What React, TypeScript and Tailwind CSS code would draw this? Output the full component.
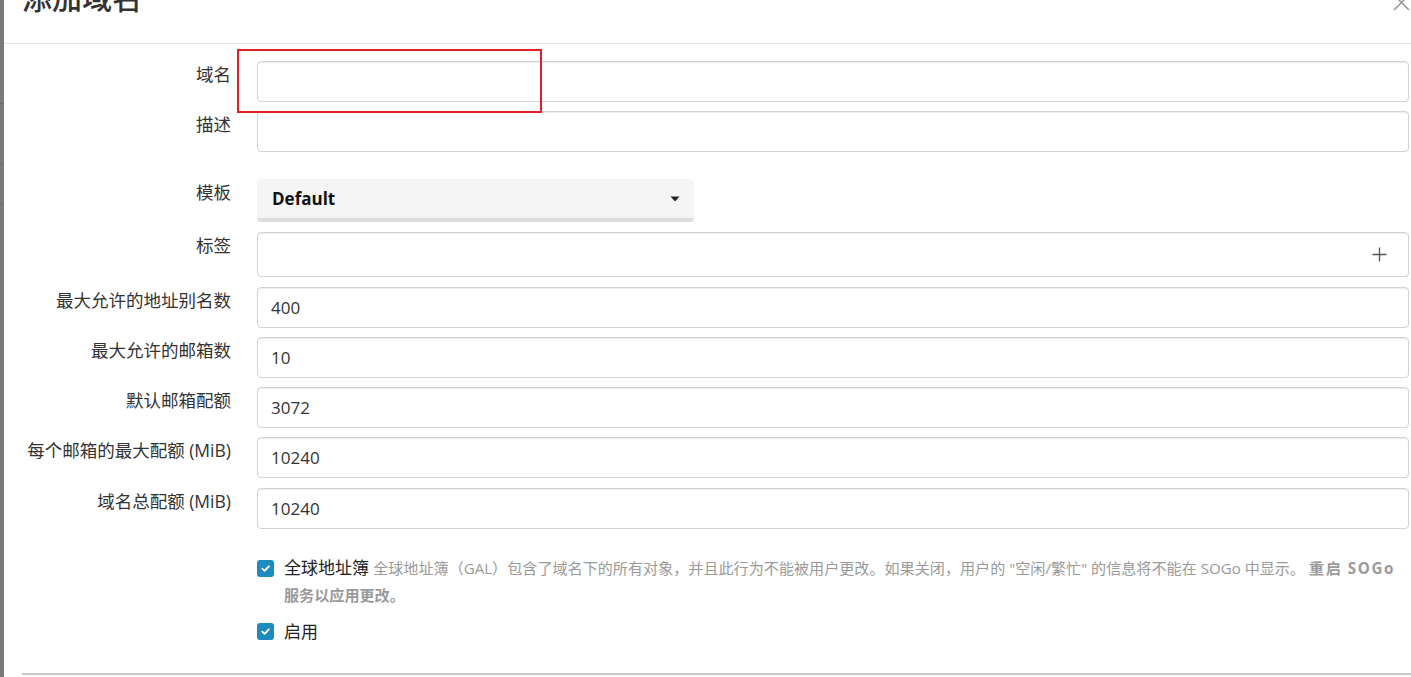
interface FieldProps {
  label: string;
  value?: string;
  inputClass?: string;
  children?: React.ReactNode;
}

// Одна строка горизонтальной формы: подпись справа, поле слева
function Field({ label, value = '', inputClass = 'h-[41px]', children }: FieldProps) {
  return (
    <div className="flex">
      <label className="w-[227px] shrink-0 pt-[1px] text-right text-[17.5px] leading-[24px] text-[#333]">
        {label}
      </label>
      <div className="ml-[26px] flex-1 relative">
        {children ?? (
          <input
            readOnly
            value={value}
            className={`${inputClass} w-full rounded-[4px] border border-[#cfd4da] bg-white px-[13px] text-[17px] text-[#333] shadow-[inset_0_1px_1px_rgba(0,0,0,0.08)] outline-none`}
          />
        )}
      </div>
    </div>
  );
}

function Check() {
  return (
    <span className="mt-[1px] flex h-[17px] w-[17px] shrink-0 items-center justify-center rounded-[3px] bg-[#1b8bc0]">
      <svg width="11" height="11" viewBox="0 0 12 12" fill="none">
        <path d="M2.5 6.2 L5 8.6 L9.6 3.6" stroke="white" strokeWidth="2" strokeLinecap="round" strokeLinejoin="round" />
      </svg>
    </span>
  );
}

function App() {
  return (
    <div className="flex h-[677px] w-full overflow-hidden bg-white font-['Open_Sans','Noto_Sans_CJK_SC',sans-serif]">
      {/* backdrop strip */}
      <div className="flex w-[4px] shrink-0 flex-col bg-[#7a7a7a]">
        <div className="h-[103px]" />
        <div className="h-px bg-[#6c6c6c]" />
        <div className="h-[59px]" />
        <div className="h-px bg-[#6c6c6c]" />
        <div className="h-[39px]" />
        <div className="h-px bg-[#6c6c6c]" />
      </div>

      {/* modal */}
      <div className="relative flex-1">
        <div className="flex h-[44px] items-start justify-between border-b border-[#e5e5e5] pl-[18px]">
          <h4 className="-mt-[17px] text-[30px] font-medium leading-[30px] text-[#333]">添加域名</h4>
          <svg className="-mt-[6px] mr-[1px]" width="17" height="17" viewBox="0 0 17 17" fill="none">
            <path d="M1 1 L16 16 M16 1 L1 16" stroke="#9a9a9a" strokeWidth="1.6" />
          </svg>
        </div>

        <div className="flex flex-col pr-[2px] pt-[17px]">
          <Field label="域名" />
          <div className="mt-[9px]">
            <Field label="描述" />
          </div>
          <div className="mt-[27px]">
            <Field label="模板">
              <div className="flex h-[43px] w-[437px] items-center justify-between rounded-[4px] border-b-[4px] border-[#dedede] bg-[#f5f5f5] pl-[15px] pr-[14px]">
                <span className="text-[17px] font-bold text-[#111]">Default</span>
                <svg width="10" height="6" viewBox="0 0 10 6">
                  <path d="M0.5 0.5 L9.5 0.5 L5 5.5 Z" fill="#222" />
                </svg>
              </div>
            </Field>
          </div>
          <div className="mt-[10px]">
            <Field label="标签">
              <div className="flex h-[45px] w-full items-center justify-end rounded-[4px] border border-[#cfd4da] bg-white pr-[21px] shadow-[inset_0_1px_1px_rgba(0,0,0,0.08)]">
                <svg width="15" height="15" viewBox="0 0 15 15" fill="none">
                  <path d="M7.5 0.5 V14.5 M0.5 7.5 H14.5" stroke="#555" strokeWidth="1.3" />
                </svg>
              </div>
            </Field>
          </div>
          <div className="mt-[10px]">
            <Field label="最大允许的地址别名数" value="400" />
          </div>
          <div className="mt-[9px]">
            <Field label="最大允许的邮箱数" value="10" />
          </div>
          <div className="mt-[9px]">
            <Field label="默认邮箱配额" value="3072" />
          </div>
          <div className="mt-[9px]">
            <Field label="每个邮箱的最大配额 (MiB)" value="10240" />
          </div>
          <div className="mt-[10px]">
            <Field label="域名总配额 (MiB)" value="10240" />
          </div>

          <div className="ml-[253px] mt-[30px] flex gap-[10px]">
            <Check />
            <p className="-mt-[5px] leading-[27px]">
              <span className="text-[17px] text-[#222]">全球地址簿</span>{' '}
              <span className="text-[15.1px] text-[#9a9a9a]">
                全球地址簿（GAL）包含了域名下的所有对象，并且此行为不能被用户更改。如果关闭，用户的 "空闲/繁忙" 的信息将不能在 SOGo 中显示。{' '}
                <b className="tracking-[1.6px]">重启 SOGo</b> <b>服务以应用更改。</b>
              </span>
            </p>
          </div>

          <div className="ml-[253px] mt-[13px] flex gap-[10px]">
            <Check />
            <span className="-mt-[4px] text-[17px] leading-[27px] text-[#222]">启用</span>
          </div>
        </div>

        <div className="absolute bottom-[2px] left-[18px] right-0 h-[2px] bg-[#c8c8c8]" />

        {/* annotation */}
        <div className="absolute left-[233px] top-[49px] h-[64px] w-[305px] border-2 border-[#e31e26]" />
      </div>
    </div>
  );
}

export default App;
